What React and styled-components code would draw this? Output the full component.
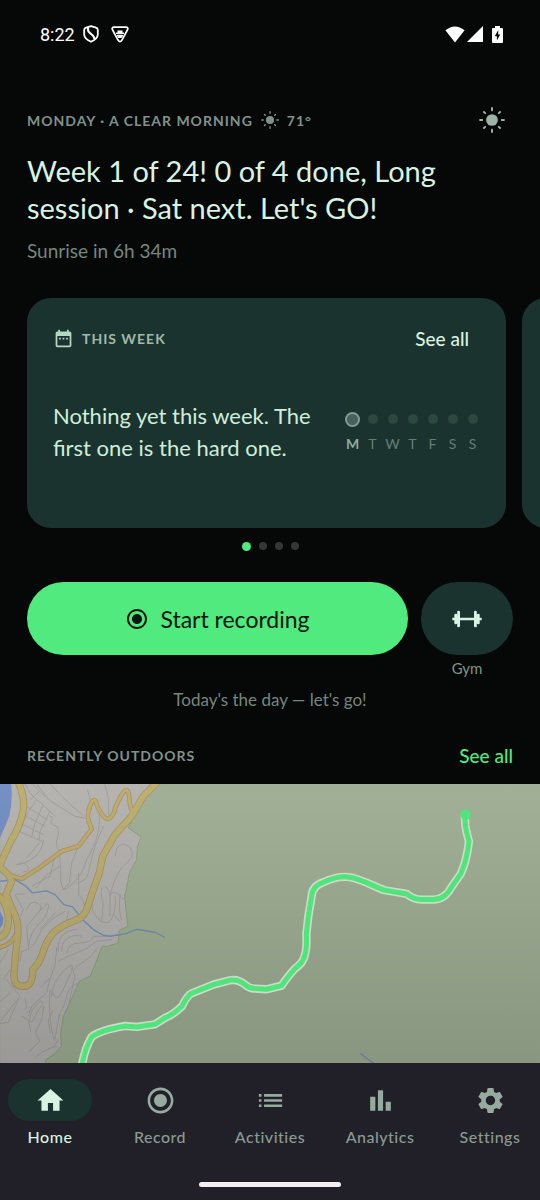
import React, {useState} from "react";
import styled, {createGlobalStyle} from "styled-components";
import {
  MdHome,
  MdRadioButtonChecked,
  MdList,
  MdBarChart,
  MdSettings,
  MdDateRange,
} from "react-icons/md";

const GlobalStyle = createGlobalStyle`
  *, *::before {
    box-sizing: border-box;
  }
  body {
    margin: 0;
    background: #050807;
    color: #d8f3e2;
    font-family: Lato, "Open Sans", sans-serif;
  }
  button {
    font-family: inherit;
    border: none;
    padding: 0;
    cursor: pointer;
  }
`;

const Page = styled.div`
  min-height: 100vh;
  display: flex;
  flex-direction: column;
  overflow: hidden;
`;

const StatusBar = styled.div`
  display: flex;
  align-items: center;
  justify-content: space-between;
  height: 68px;
  padding: 0 37px 0 40px;
  color: #fff;
  font-family: Roboto, sans-serif;
  font-size: 18px;
`;

const StatusGroup = styled.div`
  display: flex;
  align-items: center;
  gap: ${(props) => props.$gap}px;
`;

const Header = styled.header`
  padding: 35px 27px 0;
`;

const Row = styled.div`
  display: flex;
  align-items: center;
  justify-content: space-between;
`;

const HeaderRow = styled(Row)`
  height: 34px;
  padding-right: 8px;
`;

const Overline = styled.div`
  display: flex;
  align-items: center;
  gap: 8px;
  color: ${(props) => props.$color || "#82928a"};
  font-size: 14px;
  font-weight: 700;
  letter-spacing: 1px;
  text-transform: uppercase;
`;

const IconButton = styled.button`
  display: flex;
  background: none;
  color: #9db3a7;
`;

const Title = styled.h1`
  margin: 15px 0 0;
  font-size: 29px;
  font-weight: 400;
  line-height: 37px;
`;

const Subtitle = styled.p`
  margin: 12px 0 0;
  color: #77867e;
  font-size: 19px;
  line-height: 26px;
`;

const Carousel = styled.div`
  display: flex;
  gap: 16px;
  margin-top: 34px;
  padding-left: 27px;
`;

const Card = styled.section`
  flex: 0 0 calc(100% - 34px);
  height: 230px;
  padding: 27px 26px;
  border-radius: 24px;
  background: #1b332e;
`;

const CardHead = styled(Row)`
  height: 26px;
  padding-right: 11px;
`;

const CardBody = styled(Row)`
  margin-top: 49px;
  gap: 20px;
`;

const CardText = styled.p`
  flex: 1;
  margin: 0;
  color: #cdeedb;
  font-size: 22px;
  line-height: 32px;
`;

const TextLink = styled.a`
  color: ${(props) => props.$color};
  font-size: 19px;
  font-weight: 500;
  text-decoration: none;
`;

const Week = styled.div`
  display: grid;
  grid-template-columns: repeat(7, 15px);
  gap: 5px;
  justify-items: center;
`;

const Day = styled.div`
  display: flex;
  flex-direction: column;
  align-items: center;
  gap: 8px;
  color: ${(props) => (props.$today ? "#8fa99c" : "#657d75")};
  font-size: 14px;
  font-weight: ${(props) => (props.$today ? 700 : 400)};
  line-height: 18px;
`;

const DayMark = styled.span`
  display: flex;
  align-items: center;
  justify-content: center;
  height: 16px;

  &::before {
    content: "";
    width: ${(props) => (props.$today ? 15 : 10)}px;
    height: ${(props) => (props.$today ? 15 : 10)}px;
    border-radius: 50%;
    border: ${(props) => (props.$today ? "2px solid #839b90" : "none")};
    background: ${(props) => (props.$today ? "#47605a" : "#2d4841")};
  }
`;

const Pager = styled.div`
  display: flex;
  align-items: center;
  justify-content: center;
  gap: 8px;
  height: 36px;
`;

const PagerDot = styled.button`
  width: ${(props) => (props.$active ? 9 : 8)}px;
  height: ${(props) => (props.$active ? 9 : 8)}px;
  border-radius: 50%;
  background: ${(props) => (props.$active ? "#50ea7e" : "#333635")};
`;

const Actions = styled.div`
  display: flex;
  gap: 13px;
  margin-top: 18px;
  padding: 0 27px;
`;

const StartButton = styled.button`
  flex: 1;
  display: flex;
  align-items: center;
  justify-content: center;
  gap: 11px;
  height: 73px;
  border-radius: 37px;
  background: #50ea7e;
  color: #04150b;
  font-size: 23px;
`;

const GymColumn = styled.label`
  display: flex;
  flex-direction: column;
  align-items: center;
  gap: 4px;
  color: #82928a;
  font-size: 15px;
  line-height: 18px;
`;

const GymButton = styled.button`
  display: flex;
  align-items: center;
  justify-content: center;
  width: 92px;
  height: 73px;
  border-radius: 37px;
  background: #1b332e;
  color: #d8f3e2;
`;

const Hint = styled.p`
  margin: 12px 0 0;
  color: #77867e;
  font-size: 17px;
  line-height: 22px;
  text-align: center;
`;

const SectionHead = styled(Row)`
  height: 58px;
  margin-top: 15px;
  padding: 0 27px;
`;

const MapArea = styled.div`
  flex: 1 0 279px;
  display: flex;

  svg {
    width: 100%;
  }
`;

const BottomBar = styled.div`
  padding: 16px 0 13px;
  background: #211f27;
`;

const Nav = styled.nav`
  display: grid;
  grid-template-columns: repeat(5, 1fr);
  gap: 10px;
`;

const NavItem = styled.a`
  display: flex;
  flex-direction: column;
  align-items: center;
  gap: 6px;
  color: ${(props) => (props.$active ? "#d8f3e2" : "#8b9a93")};
  font-size: 16px;
  font-weight: 500;
  letter-spacing: 0.5px;
  line-height: 20px;
  text-decoration: none;
`;

const NavIcon = styled.span`
  display: flex;
  align-items: center;
  justify-content: center;
  width: 84px;
  height: 42px;
  border-radius: 21px;
  background: ${(props) => (props.$active ? "#1b332e" : "transparent")};
  color: ${(props) => (props.$active ? "#d8f3e2" : "#96ab9f")};
`;

const GestureHandle = styled.div`
  width: 142px;
  height: 5px;
  margin: 35px auto 0;
  border-radius: 3px;
  background: #f4eff4;
`;

const SunIcon = ({size}) => (
  <svg width={size} height={size} viewBox="0 0 24 24" fill="currentColor">
    <circle cx="12" cy="12" r="5.4" />
    <g stroke="currentColor" strokeWidth="1.8" strokeLinecap="round">
      <path d="M12 1v2M12 21v2M1 12h2M21 12h2M4.6 4.6l1.1 1.1M18.3 18.3l1.1 1.1M4.6 19.4l1.1-1.1M18.3 5.7l1.1-1.1" />
    </g>
  </svg>
);

const ShieldIcon = () => (
  <svg width="16" height="18" viewBox="0 0 16 18" fill="none" stroke="#fff" strokeWidth="1.8" strokeLinejoin="round">
    <path d="M8 1.2L3 2.6Q1.2 3 1.2 5v4.5c0 3 3 5.500 6.800 7.300 3.800-1.800 6.800-4.300 6.800-7.300V5q0-2-1.800-2.400z" />
    <path d="M5 2.600v2.400c0 1.500.8 2.300 2.600 3.600 2.400 1.700 4.200 3.200 3.600 5.600" strokeWidth="2.200" />
  </svg>
);

const TriangleIcon = () => (
  <svg width="18" height="17" viewBox="0 0 18 17" fill="none" stroke="#fff" strokeWidth="1.700" strokeLinejoin="round">
    <path d="M3.200 1.200h11.600q3 .2 1.600 2.800l-5.600 10.300q-1.800 2.600-3.600 0L1.600 4Q.2 1.400 3.200 1.200z" />
    <path d="M6.500 4.400h5v2h1.500v1.600H5V6.400h1.500z" fill="#fff" stroke="none" />
    <path d="M6 8.800h6v1.200l-1.500 2h-3L6 10z" fill="#fff" stroke="none" />
  </svg>
);

const WifiIcon = () => (
  <svg width="20" height="17" viewBox="0 0 20 17" fill="#fff">
    <path d="M.4 4.300Q9.800-3.400 19.600 4.300L10 16.600z" />
  </svg>
);

const SignalIcon = () => (
  <svg width="16" height="16" viewBox="0 0 16 16" fill="#fff">
    <path d="M16 0v16H0z" />
  </svg>
);

const BatteryIcon = () => (
  <svg width="11" height="17" viewBox="0 0 11 17">
    <path d="M3 0h5v2h2q1 0 1 1v13q0 1-1 1H1q-1 0-1-1V3q0-1 1-1h2z" fill="#fff" />
    <path d="M6.200 4L2.800 10.200h2.100V14.500L8.200 8.400H6.200z" fill="#050807" />
  </svg>
);

const DumbbellIcon = () => (
  <svg width="30" height="18" viewBox="0 0 30 18" fill="currentColor">
    <path d="M8 7.700h14v2.600H8zM5.200 1.500q0-.8 1.200-.8t1.600.8v15q-.4.8-1.600.8t-1.200-.8zM24.800 1.500q0-.8-1.200-.8t-1.600.8v15q.4.8 1.600.8t1.200-.8zM2.300 4.800q0-1 1.500-1t1.400 1v8.400q0 1-1.400 1t-1.500-1zM27.700 4.800q0-1-1.500-1t-1.400 1v8.400q0 1 1.400 1t1.500-1zM.3 7.700h2v2.600h-2zM27.700 7.700h2v2.600h-2z" />
  </svg>
);

const minorRoads = [
  "M75 13Q90 45 110 60T165 110",
  "M110 13L145 60 225 110 265 118",
  "M150 13L205 70 250 108",
  "M78 80L142 120M70 105L135 140M62 132L130 165M56 155L128 186",
  "M108 62L80 105 60 155M128 80L105 130 95 172M150 95L120 155 118 183",
  "M90 60L118 35 135 50M118 35L98 13",
  "M150 110Q162 112 155 122T170 140Q180 150 172 175T178 215L182 270Q180 320 190 328",
  "M130 182Q128 215 100 235T50 255M50 255q20-12 32 4t-12 18M118 190L80 235",
  "M300 90Q298 150 290 175T260 240Q250 280 225 305T190 330",
  "M235 200L215 250 208 310 190 330M178 262L140 285 108 325",
  "M315 15Q330 60 325 105M262 30Q275 70 275 90",
  "M236 282L236 345Q250 360 255 380",
  "M236 310Q262 300 265 280T285 200L310 140",
  "M165 225L150 290 98 318",
  "M345 230Q350 180 385 198Q402 212 395 235L365 265Q340 300 330 350L330 410",
  "M330 345Q345 330 360 350T375 345M305 325Q300 350 310 370L305 425Q330 440 340 405T345 350",
  "M315 320Q330 330 330 350M282 340Q270 370 280 400L305 430",
  "M360 345Q355 400 365 420M340 405L360 425",
  "M80 390Q92 360 112 370T115 400L80 440 85 500",
  "M115 400Q150 355 145 385T110 440Q85 470 85 510",
  "M45 345L70 390 62 410M50 343h25",
  "M195 395Q130 430 115 470T65 515L60 545",
  "M205 395L200 425M165 400L120 450",
  "M185 515Q185 480 215 470T245 475M175 515Q170 490 185 470T230 450",
  "M200 520Q205 490 240 490T280 470L320 470",
  "M175 545Q200 530 230 520T290 485L335 480",
  "M170 505L165 560Q150 590 140 640L95 680 85 710",
  "M155 650Q155 610 190 575T215 575L185 640Q165 670 160 640",
  "M235 610Q205 620 200 650T180 700L165 775",
  "M290 505Q280 530 245 550T225 590L205 680",
  "M20 600L60 650 5 720M30 640L0 665M55 660L25 728 0 732",
  "M75 690Q85 680 75 660M65 710L85 720 92 755M78 700L95 690",
  "M120 665Q90 690 90 718T110 700L130 670z",
  "M130 680Q130 720 115 740T120 785L88 815",
  "M150 630Q145 700 155 750T165 775M160 690L145 720 150 760",
  "M170 800Q140 805 110 830M175 780L160 805",
  "M0 550L25 510M10 600L30 570M120 625L150 595",
];

const bigRoads = [
  "M52 0Q75 50 70 90T30 190L-5 265",
  "M480 0L430 50 395 110 345 165 308 230 298 280 280 330 260 390Q250 415 220 425T165 455Q140 480 130 515T98 570Q100 620 70 620T42 585Q45 530 52 480T40 395L18 345 35 305 25 285 0 262",
  "M-10 345Q25 370 25 420T-5 475",
];

const sideRoads = [
  "M25 285L65 298 110 270 185 215 235 200 275 148Q255 110 270 78T290 75Q315 130 330 115T345 85L365 45Q385 15 388 55T398 90",
  "M-10 505Q30 500 48 465",
];

const track =
  "M245 860Q255 805 275 772Q300 752 375 739L410 742 465 734 495 715Q520 705 546 680Q560 650 575 641L640 615 690 602Q715 598 735 615Q750 628 765 627L800 629 845 618Q860 595 885 567Q910 550 915 525Q921 505 919 465L925 410 935 350Q936 320 970 308Q1015 287 1050 293C1090 300 1130 325 1155 332L1220 343Q1240 360 1265 360H1300Q1335 360 1355 322L1382 283Q1400 245 1407 185Q1398 155 1396 135L1394 105";

const TrailMap = () => (
  <svg viewBox="0 0 540 279" preserveAspectRatio="xMinYMin slice" role="img" aria-label="Route map">
    <defs>
      <linearGradient id="shade" x1="0" y1="0" x2="0" y2="1">
        <stop offset="0" stopColor="#000" stopOpacity="0" />
        <stop offset="1" stopColor="#000" stopOpacity="0.15" />
      </linearGradient>
    </defs>
    <rect width="540" height="279" fill="#a1b096" />
    <g transform="translate(0 -4.400) scale(0.33333)" fill="none" strokeLinejoin="round" strokeLinecap="round">
      <path
        d="M0 0H490L425 65 385 145 424 172 412 200 410 240 388 280 380 325 374 350 380 410 384 440 358 452 354 490 325 500 306 500 288 548 270 590 238 605 216 655 190 710 182 760 184 800 165 822 138 840 132 870H0z"
        fill="#b5b4b1"
        stroke="#8ea382"
        strokeWidth="3"
      />
      <path d="M0 0H32Q40 60 28 110L0 175zM0 395L10 415 8 435 0 445z" fill="#7590c4" />
      {minorRoads.map((d) => (
        <path key={d} d={d} stroke="#a2a19f" strokeWidth="3" />
      ))}
      <path
        d="M0 305L45 300 75 318 98 340 140 334 165 345 192 375 218 382 232 400 250 422 280 450 310 467 330 470 375 463 410 449 445 455 465 458 494 473M1082 822L1100 836 1120 850"
        stroke="#7590b4"
        strokeWidth="4"
      />
      {sideRoads.map((d) => (
        <path key={d} d={d} stroke="#ab9468" strokeWidth="14" />
      ))}
      {bigRoads.map((d) => (
        <path key={d} d={d} stroke="#ab9468" strokeWidth="22" />
      ))}
      {sideRoads.map((d) => (
        <path key={d} d={d} stroke="#c0ae6d" strokeWidth="9" />
      ))}
      {bigRoads.map((d) => (
        <path key={d} d={d} stroke="#bdb071" strokeWidth="17" />
      ))}
    </g>
    <rect width="540" height="279" fill="url(#shade)" />
    <g transform="translate(0 -4.400) scale(0.33333)" fill="none" strokeLinejoin="round">
      <path d={track} stroke="#cbdcc4" strokeWidth="25" />
      <path d={track} stroke="#50e47c" strokeWidth="15" />
      <circle cx="1397" cy="105" r="16" fill="#50e47c" />
    </g>
  </svg>
);

const days = ["M", "T", "W", "T", "F", "S", "S"];

const tabs = [
  {name: "Home", Icon: MdHome},
  {name: "Record", Icon: MdRadioButtonChecked},
  {name: "Activities", Icon: MdList},
  {name: "Analytics", Icon: MdBarChart},
  {name: "Settings", Icon: MdSettings},
];

const App = () => {
  const [tab, setTab] = useState("Home");
  const [slide, setSlide] = useState(0);

  function openTab(event, name) {
    event.preventDefault();
    setTab(name);
  }

  return (
    <Page>
      <GlobalStyle />
      <StatusBar>
        <StatusGroup $gap={8}>
          <span>8:22</span>
          <StatusGroup $gap={12}>
            <ShieldIcon />
            <TriangleIcon />
          </StatusGroup>
        </StatusGroup>
        <StatusGroup $gap={9}>
          <StatusGroup $gap={2}>
            <WifiIcon />
            <SignalIcon />
          </StatusGroup>
          <BatteryIcon />
        </StatusGroup>
      </StatusBar>

      <Header>
        <HeaderRow>
          <Overline>
            <span>Monday · A clear morning</span>
            <SunIcon size={18} />
            <span>71°</span>
          </Overline>
          <IconButton aria-label="Theme">
            <SunIcon size={26} />
          </IconButton>
        </HeaderRow>
        <Title>Week 1 of 24! 0 of 4 done, Long session · Sat next. Let's GO!</Title>
        <Subtitle>Sunrise in 6h 34m</Subtitle>
      </Header>

      <Carousel>
        <Card>
          <CardHead>
            <Overline $color="#9fbaab">
              <MdDateRange size={21} color="#b5d6c3" />
              <span>This week</span>
            </Overline>
            <TextLink href="#week" $color="#d8f3e2">See all</TextLink>
          </CardHead>
          <CardBody>
            <CardText>Nothing yet this week. The first one is the hard one.</CardText>
            <Week>
              {days.map((day, i) => (
                <Day key={i} $today={i === 0}>
                  <DayMark $today={i === 0} />
                  {day}
                </Day>
              ))}
            </Week>
          </CardBody>
        </Card>
        <Card />
      </Carousel>
      <Pager>
        {[0, 1, 2, 3].map((i) => (
          <PagerDot key={i} $active={i === slide} aria-label={"Card " + (i + 1)} onClick={() => setSlide(i)} />
        ))}
      </Pager>

      <Actions>
        <StartButton>
          <MdRadioButtonChecked size={24} />
          Start recording
        </StartButton>
        <GymColumn>
          <GymButton>
            <DumbbellIcon />
          </GymButton>
          Gym
        </GymColumn>
      </Actions>
      <Hint>Today's the day — let's go!</Hint>

      <SectionHead>
        <Overline>Recently outdoors</Overline>
        <TextLink href="#outdoors" $color="#50ea7e">See all</TextLink>
      </SectionHead>
      <MapArea>
        <TrailMap />
      </MapArea>

      <BottomBar>
        <Nav>
          {tabs.map(({name, Icon}) => (
            <NavItem
              key={name}
              href={"#" + name.toLowerCase()}
              $active={name === tab}
              onClick={(event) => openTab(event, name)}
            >
              <NavIcon $active={name === tab}>
                <Icon size={31} />
              </NavIcon>
              {name}
            </NavItem>
          ))}
        </Nav>
        <GestureHandle />
      </BottomBar>
    </Page>
  );
};

export default App;
